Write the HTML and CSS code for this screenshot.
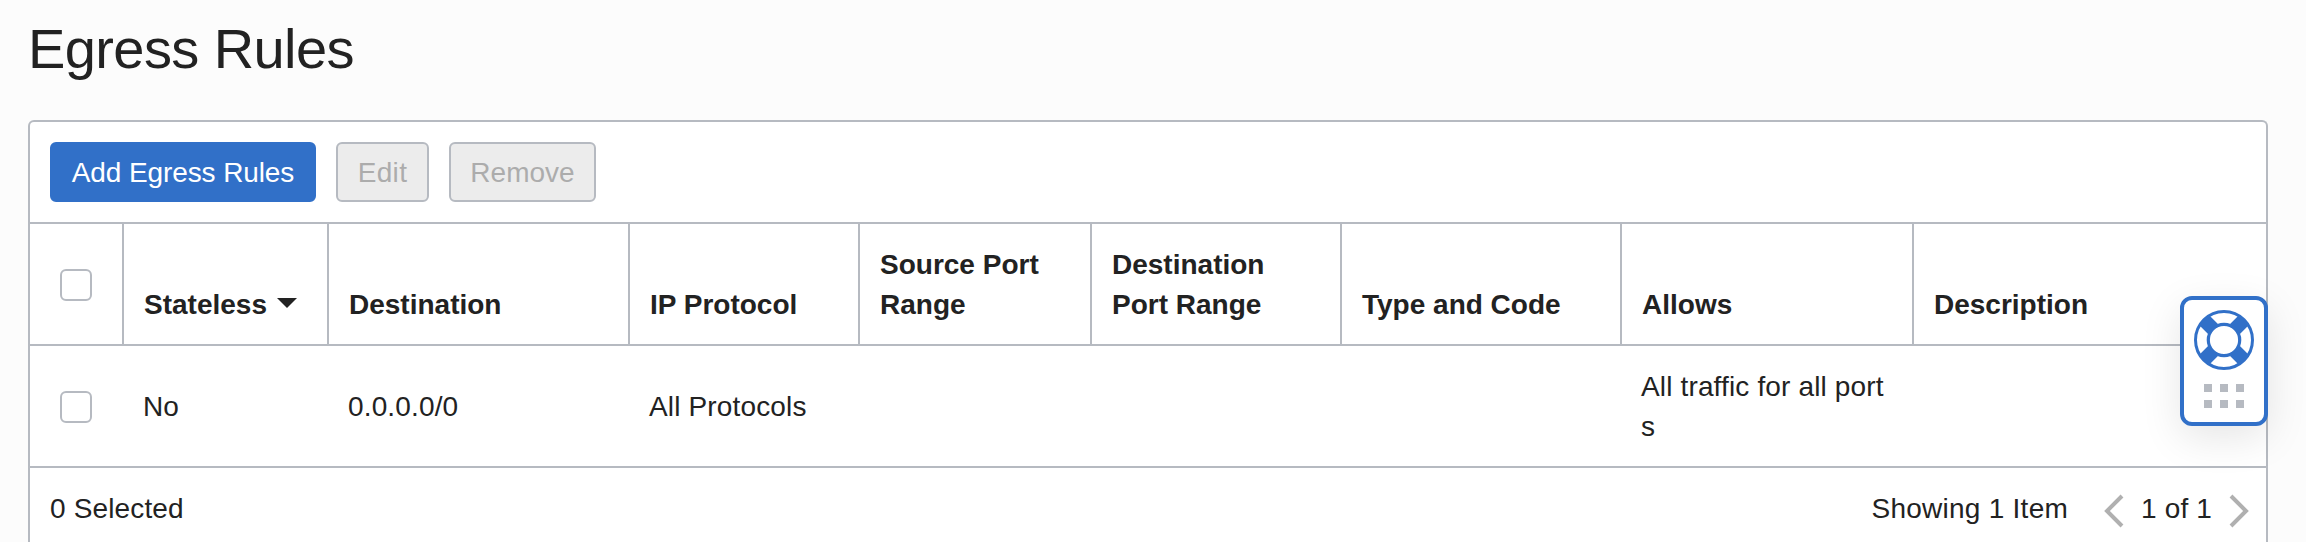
FILE: index.html
```html
<!DOCTYPE html>
<html lang="en">
<head>
<meta charset="utf-8">
<title>Egress Rules</title>
<link rel="stylesheet" href="styles.css">
</head>
<body>
<main class="page">
  <h1 class="title">Egress Rules</h1>
  <section class="panel">
    <div class="toolbar">
      <button class="btn btn-primary">Add Egress Rules</button>
      <button class="btn btn-edit" disabled>Edit</button>
      <button class="btn btn-remove" disabled>Remove</button>
    </div>
    <div class="row head">
      <div class="cell check"><span class="box"></span></div>
      <div class="cell">Stateless<svg class="sort" viewBox="0 0 20 10"><path d="M0 0H20L10 10Z"/></svg></div>
      <div class="cell">Destination</div>
      <div class="cell">IP Protocol</div>
      <div class="cell">Source Port<br>Range</div>
      <div class="cell">Destination<br>Port Range</div>
      <div class="cell">Type and Code</div>
      <div class="cell">Allows</div>
      <div class="cell">Description</div>
    </div>
    <div class="row body">
      <div class="cell check"><span class="box"></span></div>
      <div class="cell">No</div>
      <div class="cell">0.0.0.0/0</div>
      <div class="cell">All Protocols</div>
      <div class="cell"></div>
      <div class="cell"></div>
      <div class="cell"></div>
      <div class="cell break">All traffic for all ports</div>
      <div class="cell"></div>
    </div>
    <div class="footer">
      <span>0 Selected</span>
      <div class="pager">
        <span class="count">Showing 1 Item</span>
        <svg class="chev" viewBox="0 0 20 34"><path d="M18 2L3 17L18 32"/></svg>
        <span class="pages">1 of 1</span>
        <svg class="chev" viewBox="0 0 20 34"><path d="M2 2L17 17L2 32"/></svg>
      </div>
    </div>
  </section>
</main>
<aside class="help">
  <svg class="ring" viewBox="0 0 60 60">
    <g stroke-width="14"><path d="M10 10L19 19M50 10L41 19M10 50L19 41M50 50L41 41"/></g>
    <circle cx="30" cy="30" r="28.5" stroke-width="3"/>
    <circle cx="30" cy="30" r="15.7" stroke-width="3.2"/>
  </svg>
  <div class="dots"><i></i><i></i><i></i><i></i><i></i><i></i></div>
</aside>
</body>
</html>
```

FILE: styles.css
```css
* { box-sizing: border-box; }
body {
  margin: 0;
  height: 542px;
  overflow: hidden;
  background: #fcfcfc;
  color: #222;
  font: 28px/40px "Liberation Sans", Arial, sans-serif;
  letter-spacing: 0.15px;
}
.page { padding: 17px 38px 0 28px; }
.title {
  margin: 0 0 39px;
  font-size: 56px;
  font-weight: 400;
  line-height: 64px;
  letter-spacing: -0.6px;
}
.panel {
  height: 422px;
  background: #fff;
  border: 2px solid #b6bac1;
  border-bottom: 0;
  border-radius: 6px 6px 0 0;
}
.toolbar { display: flex; gap: 20px; padding: 20px; }
.btn {
  height: 60px;
  padding: 2px 0 0;
  border: 2px solid #b6bac1;
  border-radius: 6px;
  background: #ececec;
  color: #acacac;
  font: inherit;
  letter-spacing: 0;
}
.btn-primary {
  width: 266px;
  background: #3170c8;
  border-color: #3170c8;
  color: #fff;
  letter-spacing: -0.1px;
}
.btn-edit { width: 93px; letter-spacing: 0.3px; }
.btn-remove { width: 147px; }
.row {
  display: grid;
  grid-template-columns: 92px 205px 301px 230px 232px 250px 280px 292px 1fr;
  border-top: 2px solid #b6bac1;
  height: 122px;
}
.cell { display: flex; align-items: center; padding: 21px 20px 19px 21px; }
.head .cell {
  align-items: flex-end;
  padding-left: 20px;
  border-left: 2px solid #b6bac1;
  font-weight: 700;
  letter-spacing: 0;
}
.row .check { align-items: center; padding: 2px 0 0 30px; border-left: 0; }
.box {
  width: 32px;
  height: 32px;
  border: 2px solid #b6bac1;
  border-radius: 6px;
  background: #fff;
}
.sort { width: 20px; height: 10px; margin: 0 0 17px 10px; fill: #222; }
.break { word-break: break-all; }
.footer {
  display: flex;
  justify-content: space-between;
  padding: 21px 17px 0 20px;
  border-top: 2px solid #b6bac1;
}
.pager { display: flex; align-items: center; }
.count { margin-right: 36px; letter-spacing: 0.25px; }
.pages { margin: 0 17px; }
.chev {
  width: 20px;
  height: 34px;
  margin-top: 4px;
  fill: none;
  stroke: #b0b0b0;
  stroke-width: 4;
}
.help {
  position: absolute;
  left: 2180px;
  top: 296px;
  width: 88px;
  height: 130px;
  padding-top: 10px;
  display: flex;
  flex-direction: column;
  align-items: center;
  border: 4px solid #3170c8;
  border-radius: 12px;
  background: #fff;
  box-shadow: 0 12px 40px rgba(0, 0, 0, 0.1);
}
.ring { width: 60px; height: 60px; fill: none; stroke: #3170c8; }
.dots {
  display: grid;
  grid-template-columns: repeat(3, 8px);
  gap: 8px;
  margin-top: 14px;
}
.dots i { width: 8px; height: 8px; background: #b6bac1; }
```
